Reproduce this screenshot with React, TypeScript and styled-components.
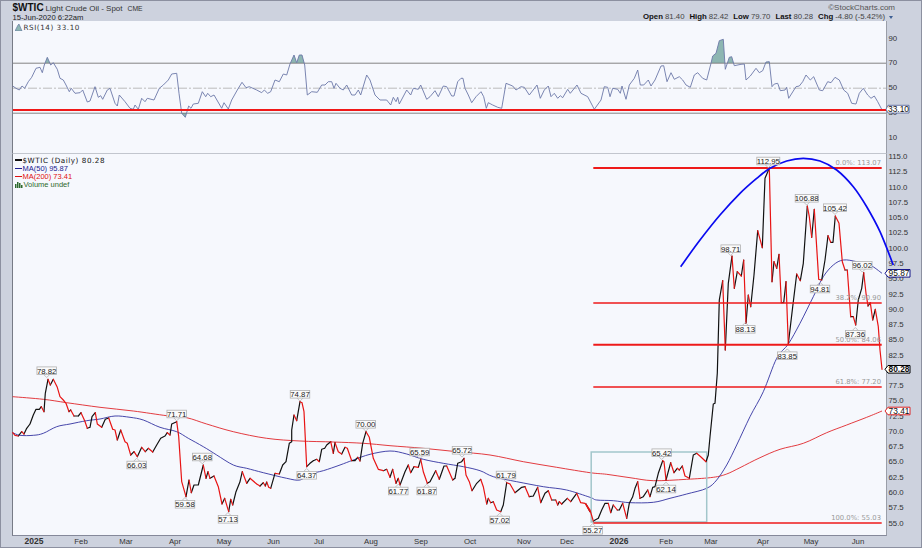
import styled, { createGlobalStyle } from 'styled-components'

type Pt = [number, number]

// points are read off 3x crops, so each list keeps its crop origin
const crop = (ox: number, oy: number, s: string): Pt[] =>
  s.trim().split(/\s+/).map(p => {
    const [x, y] = p.split(',').map(Number)
    return [ox + x / 3, oy + y / 3] as Pt
  })

const toLine = (pts: Pt[]) => pts.map(([x, y]) => `${x.toFixed(1)},${y.toFixed(1)}`).join(' ')

// catmull-rom through the points, for the moving averages and the arc
const toCurve = (pts: Pt[]) =>
  pts.slice(1).reduce((d, p, i) => {
    const p0 = pts[i - 1] || pts[i]
    const p1 = pts[i]
    const p3 = pts[i + 2] || p
    const c1 = [p1[0] + (p[0] - p0[0]) / 6, p1[1] + (p[1] - p0[1]) / 6]
    const c2 = [p[0] - (p3[0] - p1[0]) / 6, p[1] - (p3[1] - p1[1]) / 6]
    return `${d}C${c1[0].toFixed(1)} ${c1[1].toFixed(1)} ${c2[0].toFixed(1)} ${c2[1].toFixed(1)} ${p[0].toFixed(1)} ${p[1].toFixed(1)}`
  }, `M${pts[0][0].toFixed(1)} ${pts[0][1].toFixed(1)}`)

const rsi: Pt[] = [
  ...crop(0, 0, `38,258 48,265 58,270 66,258 74,265 85,245 95,232 108,205 120,202 127,218 133,195 142,172 152,195 160,188 172,208 180,235 190,240 198,255 208,275 214,265 225,280 240,278 248,270 262,306 270,303 285,260 295,292 302,287 308,298 322,270 330,265 345,310 352,318 358,285 375,305 390,325 400,328 405,315 415,328 425,295 435,305 442,295 462,300 478,265 490,255 505,240 515,222 530,220 537,280 545,340 556,352 566,318 573,325 580,312 595,310 607,275 617,290 623,280 632,290 642,285 665,325 672,308 685,327 695,300 712,270 726,247 738,263 748,260 770,270 785,278 793,270 803,280 812,275 825,240 838,245 850,222 860,225 870,192 882,165 890,188 898,165 906,165 914,195 922,285 935,275 952,277 965,255 975,255 985,245 995,245 1002,265 1008,250 1020,265 1030,270 1040,255 1055,285 1065,285 1075,270 1082,285 1100,225 1110,240 1125,285 1140,300 1160,300 1172,315 1180,292 1188,305 1193,292 1198,312 1220,270 1232,285 1240,265 1255,268 1262,255 1280,298 1290,290 1305,272 1315,290 1330,258 1340,260 1355,288 1362,288 1373,245`),
  ...crop(461, 0, `0,235 6,235 12,265 22,285 32,308 45,290 60,275 68,290 76,325 82,308 95,315 110,322 122,325 135,250 155,258 165,270 180,260 190,262 205,285 228,255 238,295 250,270 262,258 270,290 280,280 290,295 298,287 305,293 320,268 328,280 348,255 360,280 380,290 400,328 420,300 430,260 440,262 447,290 455,265 470,268 478,280 483,258 495,298 505,255 520,235 530,210 538,255 548,255 562,240 570,258 582,240 600,198 608,197 618,245 630,218 640,238 655,230 665,240 675,255 688,262 700,225 710,218 725,235 737,240 750,190 755,168 765,160 775,122 787,118 793,208 805,172 812,170 820,197 840,193 850,192 855,240 868,228 885,205 895,218 905,212 915,186 925,185 933,260 940,252 950,250 958,272 972,270 977,262 983,295 1005,260 1015,258 1025,245 1035,225 1048,240 1058,230 1075,270 1085,272 1100,245 1110,248 1122,232 1135,240 1148,270 1160,280 1172,310 1185,312 1195,280 1207,265 1220,285 1230,295 1240,288 1250,305 1262,328 1275,332`),
]

const price: Pt[] = [
  ...crop(0, 350, `38,248 45,256 55,258 65,245 72,252 80,235 90,222 100,195 108,178 118,178 124,170 132,185 136,130 144,88 151,105 160,88 172,112 180,140 190,150 198,160 207,185 212,180 222,198 235,198 243,188 254,212 262,235 270,232 276,200 286,188 292,222 305,232 316,208 326,204 338,238 345,240 352,270 362,240 375,275 382,280 392,315 402,305 412,320 425,292 436,305 445,295 458,306 470,285 482,265 495,258 502,248 510,255 515,222 530,215 536,260 545,395 558,440 567,390 574,428 582,405 595,405 610,345 618,385 624,365 630,385 642,378 655,410 666,462 674,445 686,485 692,448 698,465 708,425 720,395 727,365 740,400 750,385 770,402 780,408 790,398 796,408 800,396 806,412 812,415 825,370 838,372 848,345 858,335 868,280 875,275`),
  ...crop(290, 350, `5,240 12,195 20,212 30,155 36,158 42,185 50,350 60,340 70,332 80,328 88,335 95,298 104,295 110,285 122,275 130,310 135,278 145,305 155,312 165,292 172,295 185,332 195,332 203,322 210,333 218,280 228,245 238,262 250,325 265,358 280,362 290,358 300,382 308,358 318,400 325,385 330,405 345,365 355,345 362,368 372,350 385,352 392,328 400,365 412,400 420,395 437,362 448,388 462,348 470,348 488,390 495,385 503,340 515,335 522,325 528,375 538,395 546,422 560,400 572,388 580,410 590,462 595,445 602,458 610,455 620,480 632,485 640,465 650,398 660,402 675,428 695,412 705,410 718,440 730,438 743,412 752,458 765,430 775,422 785,450 797,450 803,465 808,455 815,462 832,445 842,455 860,430 872,458 885,460 900,485`),
  ...crop(580, 340, `18,492 30,510 40,543 55,535 65,510 75,490 85,490 92,518 100,495 112,510 118,510 128,490 140,535 148,490 158,470 165,445 173,425 180,475 190,470 203,450 210,470 218,442 225,440 235,400 248,362 252,365 258,420 272,368 282,398 292,385 298,390 307,378 315,408 328,415 340,345 350,340 362,350 378,365 385,345 390,290 400,192 405,190 412,100`),
  ...crop(580, 150, `418,450 428,392 436,600 445,400 456,318 463,415 472,365 484,378 491,330 498,520 505,435 512,470 522,375 533,242 547,293 555,85 568,55 576,395 582,335 590,355 597,313 604,458 611,458 618,395 625,582 638,470 650,372 661,392 670,340 682,168 688,200 695,262 703,178 716,388 725,390 735,330 744,257 752,277 759,277 766,198 777,220 787,335 795,360 802,360 812,500 820,500 827,525 835,450 845,415 851,368 858,430 864,468 871,458 878,510 886,478 895,530 900,600 906,658`),
]

const ma50: Pt[] = [
  ...crop(0, 350, `38,248 60,256 100,256 130,250 170,230 210,222 260,212 300,207 345,198 390,202 430,210 480,232 530,245 565,265 610,290 650,315 700,345 740,355 790,368 860,385`),
  ...crop(290, 350, `30,390 60,372 100,362 150,345 190,330 240,313 300,303 350,312 400,328 460,340 520,350 570,362 610,380 680,395 760,410 830,420 900,442`),
  ...crop(580, 340, `50,480 100,482 150,488 220,487 270,475 320,462 380,445 410,420 440,375 470,315 510,230 550,155 590,55`),
  ...crop(580, 150, `625,582 660,520 700,440 730,380 760,345 790,330 830,335 870,345 906,370`),
]

const ma200: Pt[] = [
  ...crop(0, 350, `38,140 130,148 200,158 300,172 400,183 500,197 560,203 620,222 700,245 800,265`),
  ...crop(290, 350, `30,273 130,276 220,280 300,287 400,295 500,305 600,315 700,335 800,352 900,368`),
  ...crop(580, 340, `80,403 150,413 220,422 320,418 400,412 440,402 480,383 540,353 600,328 670,310 740,278 800,255 860,232 906,213`),
]

const arc = crop(580, 150, `302,350 360,270 420,195 480,130 530,85 570,55 620,33 670,25 720,33 770,60 820,110 860,170 900,245 940,345`)

const segments = (pts: Pt[], up: boolean) =>
  pts.slice(1).reduce((d, p, i) => {
    const prev = pts[i]
    const rising = p[1] <= prev[1]
    return rising === up ? `${d}M${prev[0].toFixed(1)} ${prev[1].toFixed(1)}L${p[0].toFixed(1)} ${p[1].toFixed(1)}` : d
  }, '')

const fibs = [
  { y: 168, width: 2, label: '0.0%: 113.07', ly: 165 },
  { y: 303, width: 1.5, label: '38.2%: 90.90', ly: 300 },
  { y: 344.7, width: 2, label: '50.0%: 84.06', ly: 341.5 },
  { y: 387, width: 1.5, label: '61.8%: 77.20', ly: 384 },
  { y: 523, width: 1.5, label: '100.0%: 55.03', ly: 520 },
]

const peaks: { x: number; y: number; t: string; tip: 'down' | 'up' }[] = [
  { x: 46.7, y: 370.7, t: '78.82', tip: 'down' },
  { x: 136.7, y: 465, t: '66.03', tip: 'up' },
  { x: 176.7, y: 414, t: '71.71', tip: 'down' },
  { x: 202.3, y: 457, t: '64.68', tip: 'down' },
  { x: 185, y: 504.3, t: '59.58', tip: 'up' },
  { x: 228, y: 519.3, t: '57.13', tip: 'up' },
  { x: 300, y: 394.3, t: '74.87', tip: 'down' },
  { x: 306.7, y: 475.3, t: '64.37', tip: 'up' },
  { x: 365.7, y: 424.3, t: '70.00', tip: 'down' },
  { x: 398.3, y: 491, t: '61.77', tip: 'up' },
  { x: 419.7, y: 452, t: '65.59', tip: 'down' },
  { x: 426.7, y: 491, t: '61.87', tip: 'up' },
  { x: 462, y: 450.3, t: '65.72', tip: 'down' },
  { x: 506, y: 475, t: '61.79', tip: 'down' },
  { x: 499.7, y: 520, t: '57.02', tip: 'up' },
  { x: 592.7, y: 530.3, t: '55.27', tip: 'up' },
  { x: 661.7, y: 452.7, t: '65.42', tip: 'down' },
  { x: 666, y: 489, t: '62.14', tip: 'up' },
  { x: 787.3, y: 355.7, t: '83.85', tip: 'up' },
  { x: 768.3, y: 161, t: '112.95', tip: 'down' },
  { x: 806.7, y: 198.3, t: '106.88', tip: 'down' },
  { x: 835, y: 207.7, t: '105.42', tip: 'down' },
  { x: 730.7, y: 248.7, t: '98.71', tip: 'down' },
  { x: 862.3, y: 265.3, t: '96.02', tip: 'down' },
  { x: 820, y: 289, t: '94.81', tip: 'up' },
  { x: 745.3, y: 329.3, t: '88.13', tip: 'up' },
  { x: 855.3, y: 334.3, t: '87.36', tip: 'up' },
]

const tags = [
  { y: 273.3, t: '95.87', color: '#000080', strong: false },
  { y: 369.3, t: '80.28', color: '#000000', strong: true },
  { y: 411, t: '73.41', color: '#e01010', strong: false },
]

const months = [
  { x: 34, t: '2025', year: true },
  { x: 81, t: 'Feb' },
  { x: 126, t: 'Mar' },
  { x: 175, t: 'Apr' },
  { x: 224, t: 'May' },
  { x: 273.5, t: 'Jun' },
  { x: 319, t: 'Jul' },
  { x: 371, t: 'Aug' },
  { x: 421, t: 'Sep' },
  { x: 470, t: 'Oct' },
  { x: 524, t: 'Nov' },
  { x: 567, t: 'Dec' },
  { x: 619, t: '2026', year: true },
  { x: 666, t: 'Feb' },
  { x: 711, t: 'Mar' },
  { x: 763, t: 'Apr' },
  { x: 811, t: 'May' },
  { x: 858, t: 'Jun' },
]

const priceTicks = Array.from({ length: 25 }, (_, i) => (115 - i * 2.5).toFixed(1))
const rsiTicks = ['90', '70', '50', '30', '10']

const quote = [
  ['Open', '81.40'],
  ['High', '82.42'],
  ['Low', '79.70'],
  ['Last', '80.28'],
  ['Chg', '-4.80 (-5.42%)'],
]

const GlobalStyle = createGlobalStyle`
  html, body {
    margin: 0;
    padding: 0;
    background: #cdd2de;
  }
`

const Frame = styled.div`
  width: 922px;
  height: 548px;
  box-sizing: border-box;
  overflow: hidden;
  padding-left: 10.5px;
  background: #cdd2de;
  border: 1px solid #8c90a0;
  border-width: 1px 1px 1.5px 1.5px;
  font-family: "Liberation Sans", Arial, sans-serif;
  color: #222;
`

const Header = styled.header`
  height: 20px;
  box-sizing: border-box;
  padding: 2px 34px 0 1px;
  display: flex;
  justify-content: space-between;
`

const TitleBlock = styled.div`
  display: flex;
  flex-direction: column;
`

const TitleRow = styled.div`
  display: flex;
  align-items: baseline;
  gap: 2px;
  height: 10px;
  line-height: 10px;
  font-size: 8px;
  color: #333;
`

const Symbol = styled.span`
  font-size: 10px;
  font-weight: 700;
  color: #111;
`

const Exchange = styled.span`
  margin-left: 3px;
  font-size: 6.8px;
`

const DateLine = styled.div`
  margin-top: 1px;
  font-size: 7.7px;
  line-height: 8px;
  color: #222;
`

const QuoteBlock = styled.div`
  display: flex;
  flex-direction: column;
  align-items: flex-end;
`

const Brand = styled.div`
  margin-right: -8px;
  font-size: 8px;
  line-height: 9px;
  color: #555;
`

const QuoteRow = styled.div`
  display: flex;
  align-items: center;
  gap: 5px;
  margin-top: 1px;
  margin-right: -6px;
  font-size: 7.8px;
  line-height: 8px;
  color: #444;
`

const QuoteItem = styled.span`
  & > b {
    color: #111;
    margin-right: 2px;
  }
`

const Caret = styled.i`
  width: 0;
  height: 0;
  margin-left: -1px;
  border: 2.5px solid transparent;
  border-top: 3px solid #3d5f94;
  border-bottom: 0;
`

const Pane = styled.section<{ $height: number }>`
  height: ${props => props.$height}px;
  display: flex;
`

const Plot = styled.div`
  position: relative;
  z-index: 1;
  flex: none;
  width: 873px;
  background: #f6f8fd;
  border-left: 1px solid #777b86;
  border-right: 1px solid #9a9ea8;
  & > svg {
    display: block;
    overflow: visible;
  }
`

const RsiPlot = styled(Plot)`
  border-bottom: 1.5px solid #c2c6ce;
`

const PricePlot = styled(Plot)`
  border-bottom: 1.5px solid #85899a;
`

const Axis = styled.div<{ $step: number; $top: number }>`
  display: grid;
  grid-auto-rows: ${props => props.$step}px;
  align-content: start;
  margin-top: ${props => props.$top}px;
  padding-left: 2px;
  font-size: 7.8px;
  color: #333;
  & > span {
    display: flex;
    align-items: center;
  }
`

const Legend = styled.div`
  position: absolute;
  left: 2px;
  top: 2px;
  z-index: 2;
`

const LegendRow = styled.div<{ $color: string; $wide?: boolean }>`
  display: flex;
  align-items: center;
  gap: 1px;
  height: 8.2px;
  font-family: ${props => (props.$wide ? '"DejaVu Sans", Verdana, sans-serif' : '"Liberation Sans", Arial, sans-serif')};
  font-size: ${props => (props.$wide ? 7.2 : 7.5)}px;
  letter-spacing: ${props => (props.$wide ? 0.55 : 0)}px;
  color: ${props => props.$color};
`

const Swatch = styled.i<{ $color: string }>`
  width: 7px;
  height: 1.5px;
  background: ${props => props.$color};
`

const LegendIcon = styled.svg`
  width: 8px;
  height: 7px;
  flex: none;
`

const XAxis = styled.svg`
  display: block;
  width: 875px;
  height: 11px;
`

const MonthLabel = styled.text<{ $year?: boolean }>`
  font-family: "Liberation Sans", Arial, sans-serif;
  font-size: ${props => (props.$year ? 8.5 : 7.8)}px;
  font-weight: ${props => (props.$year ? 700 : 400)};
  fill: #333;
  text-anchor: middle;
`

const PeakText = styled.text`
  font-family: "Liberation Sans", Arial, sans-serif;
  font-size: 7.8px;
  fill: #222;
  text-anchor: middle;
`

const FibText = styled.text`
  font-family: "DejaVu Sans", Verdana, sans-serif;
  font-size: 6.8px;
  fill: #9a9a9a;
  text-anchor: end;
`

const TagText = styled.text<{ $strong?: boolean }>`
  font-family: "Liberation Sans", Arial, sans-serif;
  font-size: 8.4px;
  font-weight: ${props => (props.$strong ? 700 : 400)};
  fill: #111;
  text-anchor: middle;
`

const Peak = ({ x, y, t, tip }: { x: number; y: number; t: string; tip: 'down' | 'up' }) => {
  const w = t.length > 5 ? 23 : 19.5
  const edge = tip === 'down' ? y + 3.8 : y - 3.8
  const point = tip === 'down' ? edge + 3 : edge - 3
  return (
    <g>
      <path d={`M${x - 3} ${edge}L${x} ${point}L${x + 3} ${edge}`} fill="none" stroke="#b4b4b4" strokeWidth="0.8" />
      <rect x={x - w / 2} y={y - 3.8} width={w} height={7.6} fill="#fbfbfb" stroke="#b0b0b0" strokeWidth="0.8" />
      <PeakText x={x} y={y + 2.9}>{t}</PeakText>
    </g>
  )
}

const ValueTag = ({ y, t, color, strong }: { y: number; t: string; color: string; strong?: boolean }) => (
  <g>
    <path
      d={`M885 ${y}L888 ${y - 3.8}H910V${y + 3.8}H888Z`}
      fill="#fff"
      stroke={color}
      strokeWidth={strong ? 1 : 0.9}
    />
    <TagText x={899} y={y + 3} $strong={strong}>{t}</TagText>
  </g>
)

const RsiChart = () => {
  const line = toLine(rsi)
  const first = rsi[0][0]
  const last = rsi[rsi.length - 1][0]
  return (
    <svg width="873" height="133" viewBox="13 21 873 133">
      <defs>
        <clipPath id="overbought"><rect x="13" y="21" width="873" height="42" /></clipPath>
        <clipPath id="oversold"><rect x="13" y="113" width="873" height="41" /></clipPath>
      </defs>
      <polygon points={`${line} ${last},63 ${first},63`} fill="#8db6b2" clipPath="url(#overbought)" />
      <polygon points={`${line} ${last},113 ${first},113`} fill="#8db6b2" clipPath="url(#oversold)" />
      <line x1="13" x2="886" y1="63.2" y2="63.2" stroke="#777" strokeWidth="0.9" />
      <line x1="13" x2="886" y1="88.2" y2="88.2" stroke="#b5b5b5" strokeWidth="0.9" strokeDasharray="9 2 2 2" />
      <line x1="13" x2="886" y1="113.2" y2="113.2" stroke="#777" strokeWidth="0.9" />
      <polyline points={line} fill="none" stroke="#6c78a8" strokeWidth="0.9" />
      <line x1="13" x2="886" y1="110" y2="110" stroke="#f01818" strokeWidth="1.8" />
      <path d="M886 109.2L888 105.3H909V113H888Z" fill="#fff" stroke="#4a5a94" strokeWidth="0.8" />
      <TagText x={898.5} y={112}>33.10</TagText>
    </svg>
  )
}

const PriceChart = () => (
  <svg width="873" height="382" viewBox="13 154 873 382">
    <path d={toCurve(ma200)} fill="none" stroke="#e0262a" strokeWidth="0.9" />
    <path d={toCurve(ma50)} fill="none" stroke="#3232a0" strokeWidth="0.9" />
    <rect x="591.2" y="452" width="115.5" height="70" fill="none" stroke="#a2c6cb" strokeWidth="1.5" />
    <path d={segments(price, true)} fill="none" stroke="#111" strokeWidth="1.2" strokeLinecap="round" />
    <path d={segments(price, false)} fill="none" stroke="#e81414" strokeWidth="1.2" strokeLinecap="round" />
    {fibs.map(f => (
      <g key={f.label}>
        <line x1="593.3" x2="881.7" y1={f.y} y2={f.y} stroke="#ee1a1a" strokeWidth={f.width} />
        <FibText x={881} y={f.ly}>{f.label}</FibText>
      </g>
    ))}
    <path d={toCurve(arc)} fill="none" stroke="#0a0af0" strokeWidth="1.7" />
    {peaks.map(p => <Peak key={p.t + p.x} {...p} />)}
    {tags.map(t => <ValueTag key={t.t} {...t} />)}
  </svg>
)

const App = () => (
  <Frame>
    <GlobalStyle />
    <Header>
      <TitleBlock>
        <TitleRow>
          <Symbol>$WTIC</Symbol>
          <span>Light Crude Oil - Spot</span>
          <Exchange>CME</Exchange>
        </TitleRow>
        <DateLine>15-Jun-2020 6:22am</DateLine>
      </TitleBlock>
      <QuoteBlock>
        <Brand>©StockCharts.com</Brand>
        <QuoteRow>
          {quote.map(([name, value]) => (
            <QuoteItem key={name}><b>{name}</b>{value}</QuoteItem>
          ))}
          <Caret />
        </QuoteRow>
      </QuoteBlock>
    </Header>

    <Pane $height={133}>
      <RsiPlot>
        <Legend>
          <LegendRow $color="#333" $wide>
            <LegendIcon viewBox="0 0 8 7">
              <path d="M0 7L3 1L4 0L7 7Z" fill="#8db6b2" stroke="#5b6c9c" strokeWidth="0.6" />
            </LegendIcon>
            RSI(14) 33.10
          </LegendRow>
        </Legend>
        <RsiChart />
      </RsiPlot>
      <Axis $step={24.85} $top={4.6}>
        {rsiTicks.map(t => <span key={t}>{t}</span>)}
      </Axis>
    </Pane>

    <Pane $height={382}>
      <PricePlot>
        <Legend>
          <LegendRow $color="#111" $wide><Swatch $color="#111" />$WTIC (Daily) 80.28</LegendRow>
          <LegendRow $color="#1a1a90"><Swatch $color="#1a1a90" />MA(50) 95.87</LegendRow>
          <LegendRow $color="#e01010"><Swatch $color="#e01010" />MA(200) 73.41</LegendRow>
          <LegendRow $color="#2e6a2e">
            <LegendIcon viewBox="0 0 8 7">
              <path d="M0 3h1.5v4H0zM2 1h1.5v6H2zM4 2h1.5v5H4zM6 4h1.5v3H6z" fill="#2e6a2e" />
            </LegendIcon>
            Volume undef
          </LegendRow>
        </Legend>
        <PriceChart />
      </PricePlot>
      <Axis $step={15.28} $top={-5}>
        {priceTicks.map(t => <span key={t}>{t}</span>)}
      </Axis>
    </Pane>

    <XAxis viewBox="12 536 875 11">
      {months.map(m => <MonthLabel key={m.t + m.x} x={m.x} y={544} $year={m.year}>{m.t}</MonthLabel>)}
    </XAxis>
  </Frame>
)

export default App
